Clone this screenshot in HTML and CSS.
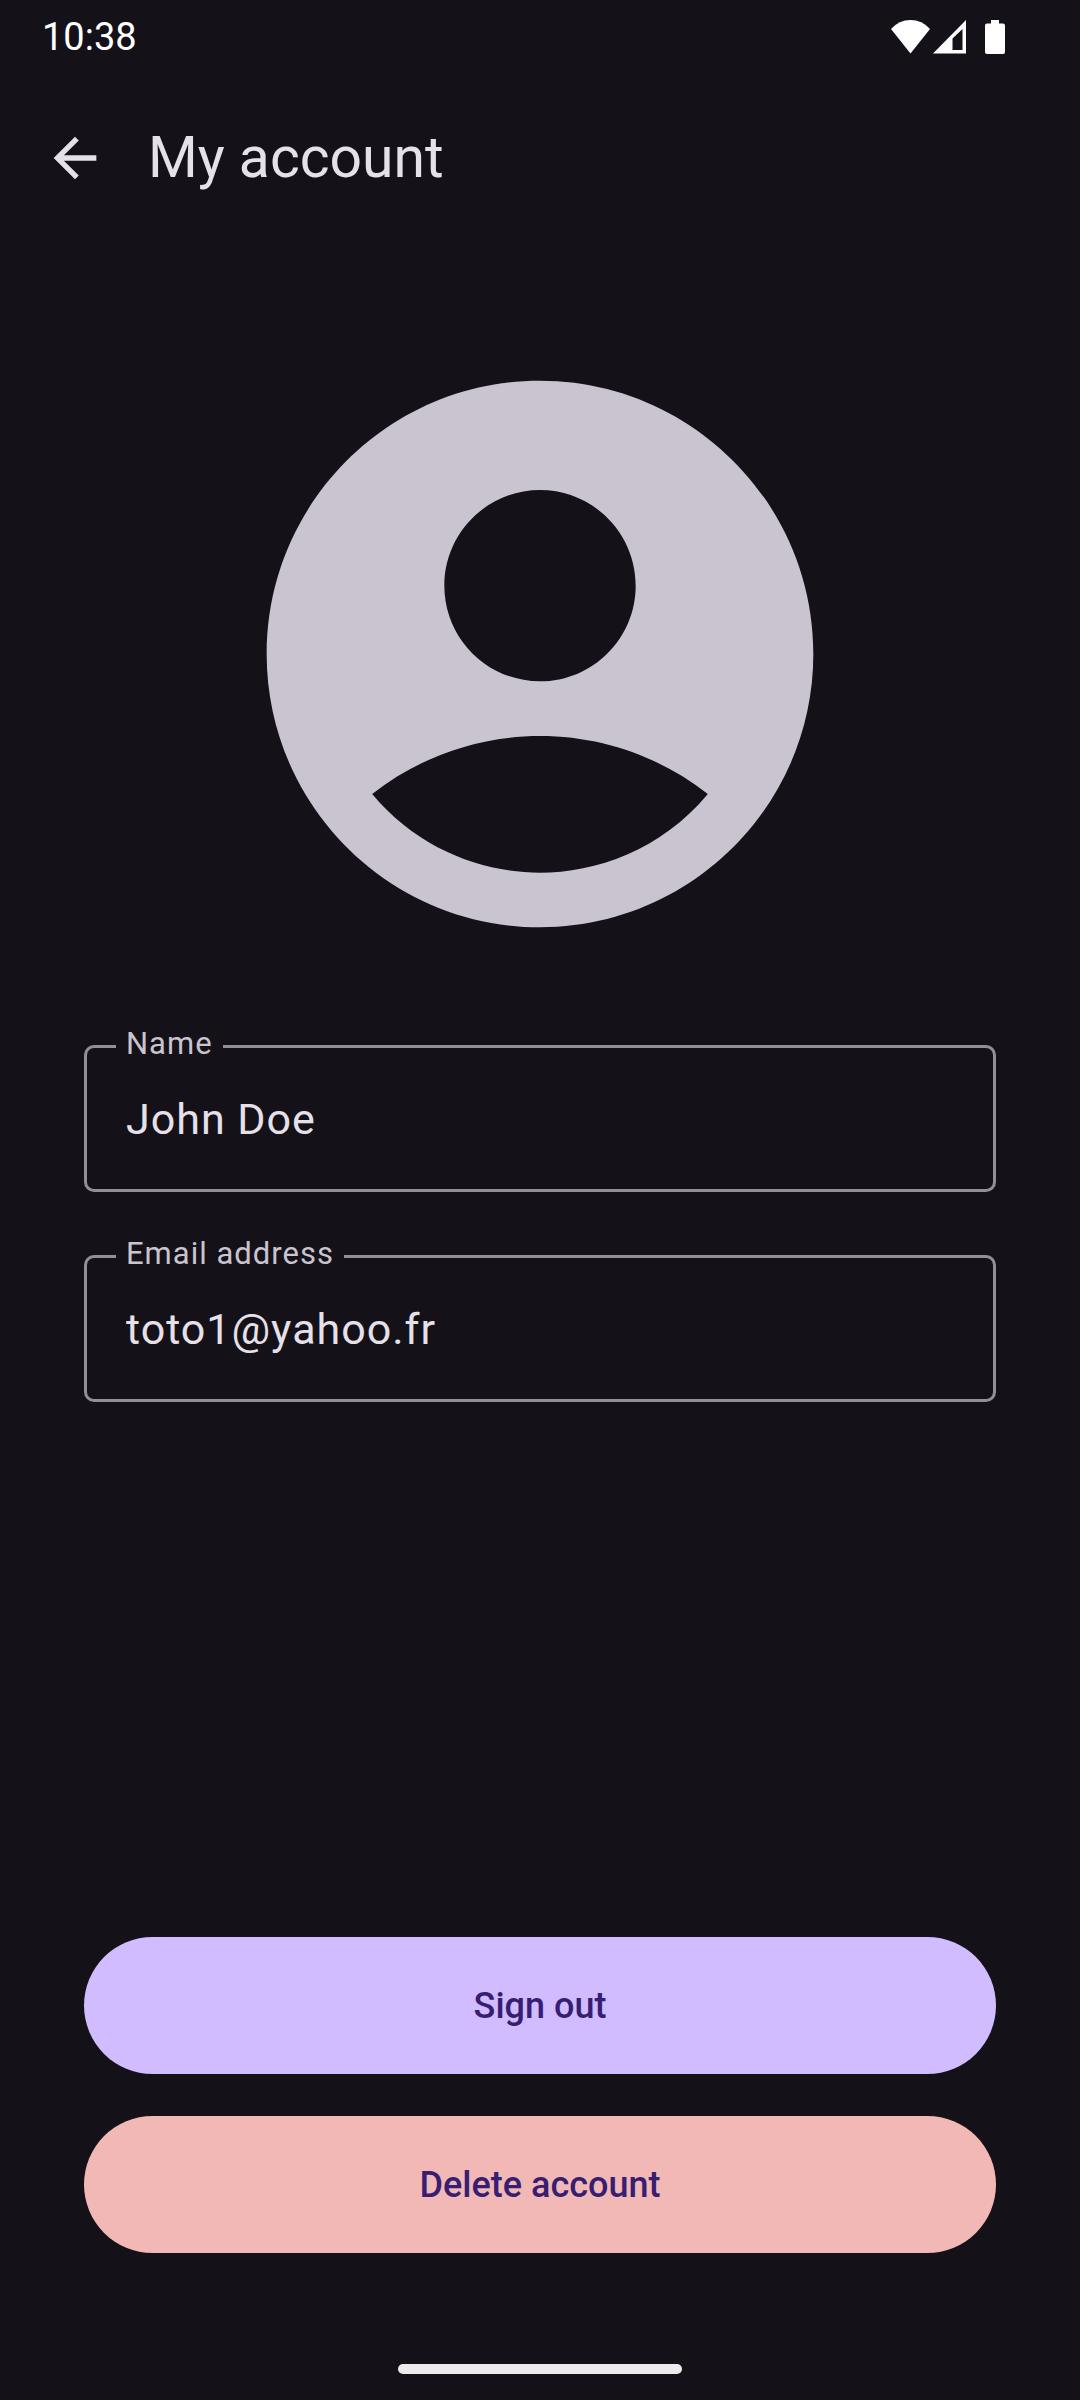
FILE: index.html
```html
<!DOCTYPE html>
<html lang="en">
<head>
  <meta charset="utf-8">
  <meta name="viewport" content="width=device-width, initial-scale=1">
  <title>My account</title>
  <link rel="stylesheet" href="styles.css">
</head>
<body class="screen">
  <div class="status-bar">
    <time class="clock">10:38</time>
    <div class="status-icons">
      <svg class="icon-wifi" viewBox="0 0 39 34" aria-hidden="true"><path d="M19.500 33.500L0 9Q8 0 19.500 0T39 9Z"/></svg>
      <svg class="icon-signal" viewBox="0 0 34 34" aria-hidden="true"><path fill-rule="evenodd" d="M0 33.500L33 0V33.500ZM19.500 18.500V30H29.500V9Z"/></svg>
      <svg class="icon-battery" viewBox="0 0 20 34" aria-hidden="true"><path d="M6 0h8v3.500h4q2 0 2 2V32q0 2-2 2H2q-2 0-2-2V5.500q0-2 2-2h4z"/></svg>
    </div>
  </div>

  <header class="app-bar">
    <button class="back" type="button" aria-label="Back">
      <svg class="icon-back" viewBox="0 0 24 24" aria-hidden="true"><path d="M20 11H7.830l5.590-5.590L12 4l-8 8 8 8 1.410-1.410L7.830 13H20z"/></svg>
    </button>
    <h1 class="title">My account</h1>
  </header>

  <main class="content">
    <svg class="avatar" viewBox="0 0 24 24" role="img" aria-label="Profile picture"><path d="M12 2C6.480 2 2 6.480 2 12s4.480 10 10 10 10-4.480 10-10S17.520 2 12 2zM12 6c1.930 0 3.500 1.570 3.500 3.500S13.930 13 12 13s-3.500-1.570-3.500-3.500S10.070 6 12 6zM12 20c-2.030 0-4.430-.820-6.140-2.880C7.550 15.800 9.680 15 12 15s4.450.800 6.140 2.120C16.430 19.180 14.030 20 12 20z"/></svg>

    <form class="fields">
      <div class="field">
        <label class="field-label" for="name">Name</label>
        <input class="field-input" id="name" type="text" value="John Doe">
      </div>
      <div class="field">
        <label class="field-label" for="email">Email address</label>
        <input class="field-input" id="email" type="email" value="toto1@yahoo.fr">
      </div>
    </form>

    <div class="actions">
      <button class="button" type="button">Sign out</button>
      <button class="button button-danger" type="button">Delete account</button>
    </div>
  </main>

  <div class="home-bar"></div>
</body>
</html>
```

FILE: styles.css
```css
* {
  box-sizing: border-box;
}

.screen {
  display: flex;
  flex-direction: column;
  min-height: 100vh;
  margin: 0;
  background: #141218;
  color: #e6e0e9;
  font-family: Roboto, sans-serif;
}

.status-bar {
  display: flex;
  align-items: center;
  justify-content: space-between;
  height: 74px;
  padding: 0 75px 0 42px;
  color: #fff;
}

.clock {
  font-size: 38px;
  line-height: 44px;
}

.status-icons {
  display: flex;
  align-items: center;
  fill: currentColor;
}

.icon-wifi {
  width: 39px;
  height: 34px;
}

.icon-signal {
  width: 34px;
  height: 34px;
  margin: 0 18px 0 3px;
}

.icon-battery {
  width: 20px;
  height: 34px;
}

.app-bar {
  display: flex;
  align-items: center;
  gap: 41px;
  height: 168px;
  padding: 0 43px;
}

.back {
  display: flex;
  padding: 0;
  border: 0;
  background: none;
  color: inherit;
}

.icon-back {
  width: 64px;
  height: 64px;
  fill: currentColor;
}

.title {
  margin: 0;
  font-size: 57px;
  font-weight: 400;
  line-height: 74px;
}

.content {
  display: flex;
  flex: 1;
  flex-direction: column;
  padding: 84px 84px 111px;
}

.avatar {
  align-self: center;
  width: 656px;
  max-width: 100%;
  fill: #cac4d0;
}

.fields {
  display: flex;
  flex-direction: column;
  gap: 63px;
  margin-top: 63px;
}

.field {
  position: relative;
}

/* The label sits over the outline and hides the part behind it. */
.field-label {
  position: absolute;
  top: -22px;
  left: 32px;
  padding: 0 10px;
  background: #141218;
  color: #cac4d0;
  font-size: 31px;
  letter-spacing: 1px;
  line-height: 42px;
}

.field-input {
  display: block;
  width: 100%;
  height: 147px;
  padding: 0 39px;
  border: 3px solid #938f99;
  border-radius: 10px;
  background: transparent;
  color: inherit;
  font-family: inherit;
  font-size: 43px;
  letter-spacing: 1px;
}

.actions {
  display: flex;
  flex-direction: column;
  gap: 42px;
  margin-top: auto;
}

.button {
  height: 137px;
  border: 0;
  border-radius: 69px;
  background: #d0bcff;
  color: #381e72;
  font-family: inherit;
  font-size: 36px;
  font-weight: 500;
}

.button-danger {
  background: #f2b8b5;
}

.home-bar {
  align-self: center;
  width: 284px;
  height: 10px;
  margin-bottom: 26px;
  border-radius: 5px;
  background: #ececec;
}
```
